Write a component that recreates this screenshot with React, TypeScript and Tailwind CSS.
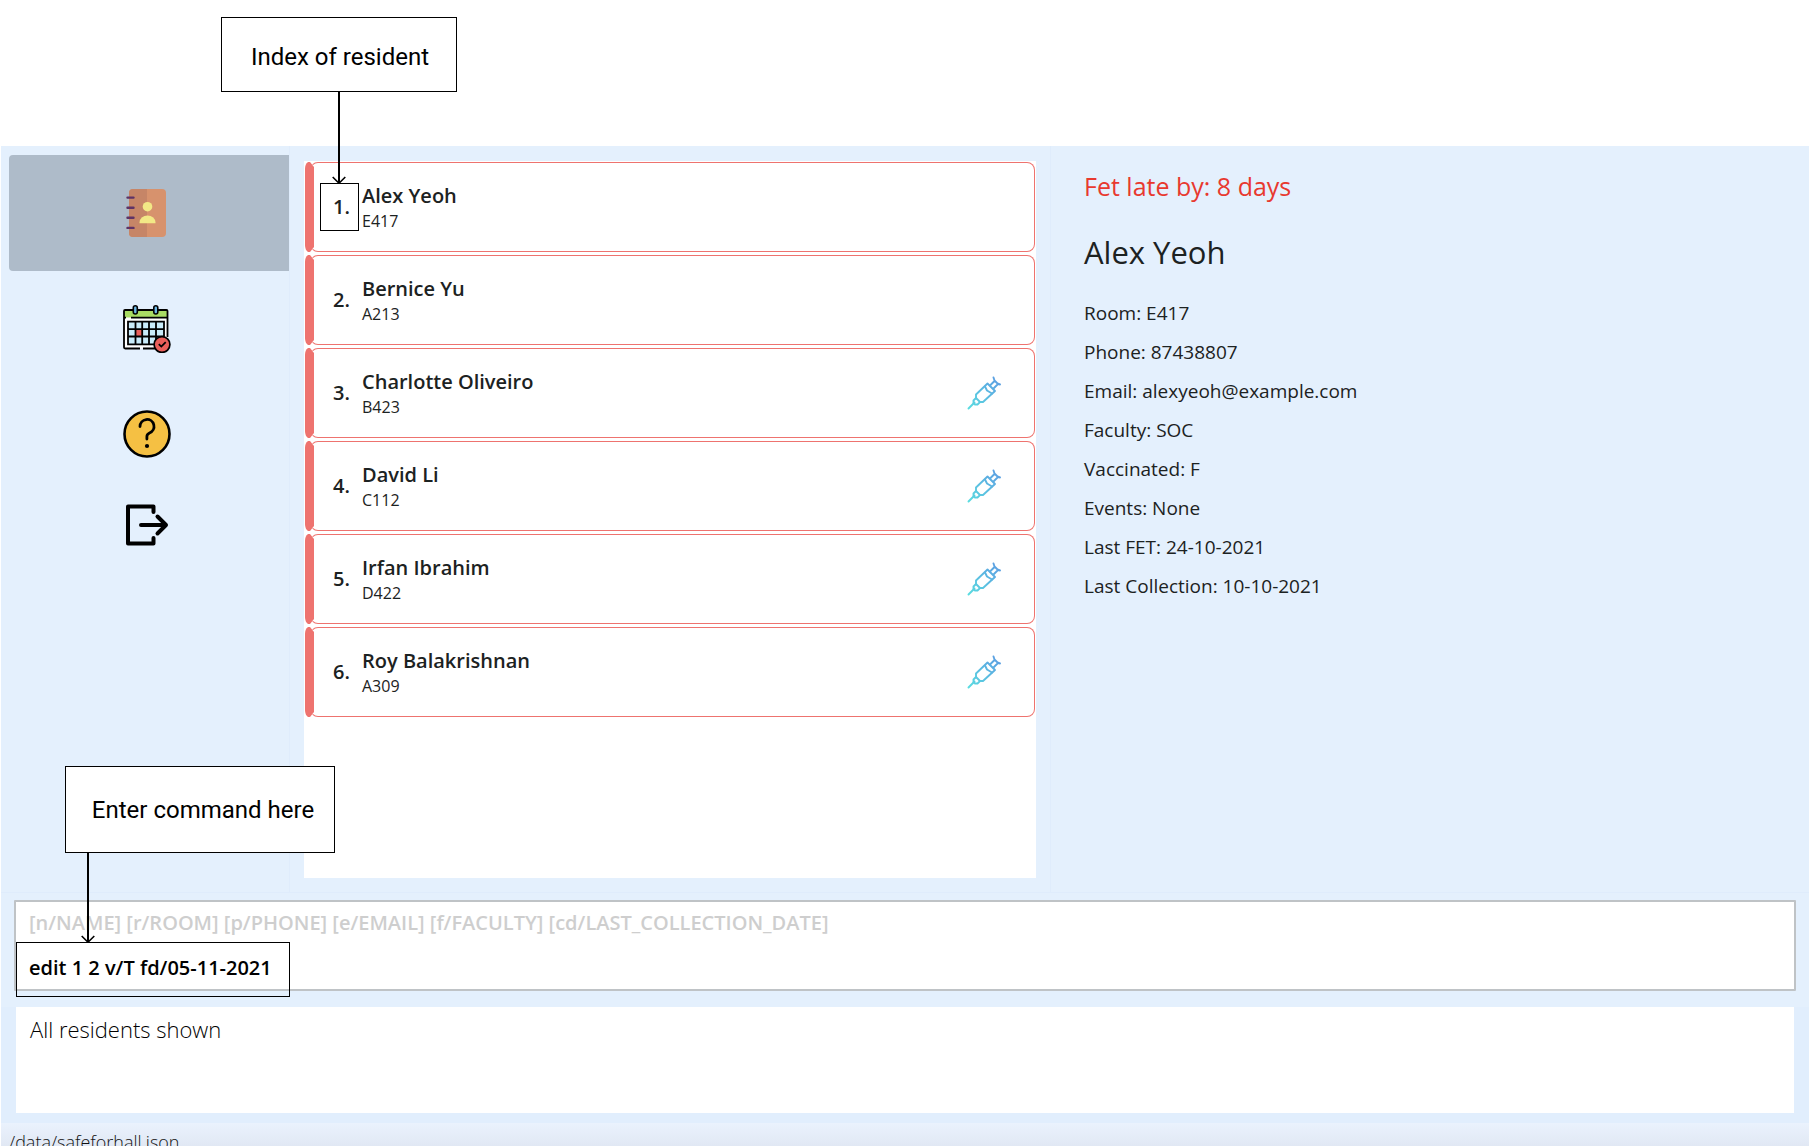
import React from "react";

type Resident = { name: string; room: string; vaccinated: boolean };

const residents: Resident[] = [
  { name: "Alex Yeoh", room: "E417", vaccinated: false },
  { name: "Bernice Yu", room: "A213", vaccinated: false },
  { name: "Charlotte Oliveiro", room: "B423", vaccinated: true },
  { name: "David Li", room: "C112", vaccinated: true },
  { name: "Irfan Ibrahim", room: "D422", vaccinated: true },
  { name: "Roy Balakrishnan", room: "A309", vaccinated: true },
];

const details = [
  "Room: E417",
  "Phone: 87438807",
  "Email: alexyeoh@example.com",
  "Faculty: SOC",
  "Vaccinated: F",
  "Events: None",
  "Last FET: 24-10-2021",
  "Last Collection: 10-10-2021",
];

function BookIcon() {
  return (
    <svg viewBox="0 0 48 48" className="size-12" aria-hidden="true">
      <rect x="6" y="0" width="37" height="48" rx="4" fill="#d7926d" />
      <path d="M10 0H24V48H10a4 4 0 0 1-4-4V4a4 4 0 0 1 4-4Z" fill="#c68567" />
      <g stroke="#5f3366" strokeWidth="2.4" strokeLinecap="round">
        <path d="M4.5 8.6h6M4.5 18.7h6M4.5 28.8h6M4.5 38.9h6" />
      </g>
      <circle cx="24.5" cy="17.7" r="4.8" fill="#f2e886" />
      <path d="M16.5 34.2v-.6a8 7.2 0 0 1 16 0v.6Z" fill="#f2e886" />
    </svg>
  );
}

function CalendarIcon() {
  return (
    <svg viewBox="0 0 48 48" className="size-12" aria-hidden="true">
      <rect x="1" y="5" width="43.5" height="38.5" rx="1" fill="#fff" />
      <path d="M1 5h43.5v7.6H1Z" fill="#a9dc64" />
      <path d="M17 43.5H2.2Q1 43.5 1 42.3V6Q1 5 2 5h41.5Q44.5 5 44.5 6V32M20 43.5h13M8 12.600h36.5M1 12.600h2" fill="none" stroke="#000" strokeWidth="1.8" />
      <path d="M5 16.7h36v22.6H5Z" fill="#c9ecfa" />
      <path d="M13 24h6v7h-6Z" fill="#e95f5a" />
      <path d="M5 16.7h36v22.6H5ZM12.500 16.700v22.600M19.200 16.700v22.600M26 16.700v22.600M33 16.700v22.600M5 24.200h36M5 31.500h36" fill="none" stroke="#000" strokeWidth="1.8" />
      <rect x="10.300" y=".8" width="4" height="8.200" rx="2" fill="#6cb8e4" stroke="#000" strokeWidth="1.600" />
      <rect x="30.800" y=".8" width="4" height="8.200" rx="2" fill="#6cb8e4" stroke="#000" strokeWidth="1.600" />
      <circle cx="39" cy="39.500" r="7.900" fill="#e95f5a" stroke="#000" strokeWidth="1.700" />
      <path d="m35.800 39.200 2.500 2.400 4.400-4.500" fill="none" stroke="#000" strokeWidth="1.800" />
    </svg>
  );
}

function HelpIcon() {
  return (
    <svg viewBox="0 0 48 48" className="size-12" aria-hidden="true">
      <circle cx="24" cy="24" r="22.500" fill="#f5c043" stroke="#000" strokeWidth="2.600" />
      <path d="M17 16.500a7 7 0 1 1 9.500 6.500c-2 .9-2.600 2-2.600 3.600V29" fill="none" stroke="#000" strokeWidth="2.800" strokeLinecap="round" />
      <circle cx="24" cy="36" r="2.100" />
    </svg>
  );
}

function ExitIcon() {
  return (
    <svg viewBox="0 0 48 48" className="size-12" aria-hidden="true">
      <g fill="none" stroke="#000" strokeWidth="4" strokeLinecap="round" strokeLinejoin="round">
        <path d="M30.500 11V5.500H5V42.500H30.500V37" />
        <path d="M18 24H42.500M34.500 15.500 43 24l-8.500 8.500" />
      </g>
    </svg>
  );
}

function SyringeIcon() {
  return (
    <svg viewBox="0 0 34 34" className="size-[34px]" role="img" aria-label="Vaccinated">
      <defs>
        <linearGradient id="syringe" x1="0" y1="34" x2="34" y2="0" gradientUnits="userSpaceOnUse">
          <stop offset="0" stopColor="#5adfe0" />
          <stop offset="1" stopColor="#5c98e2" />
        </linearGradient>
      </defs>
      <g fill="none" stroke="url(#syringe)" strokeWidth="1.900" strokeLinecap="round" strokeLinejoin="round">
        <path d="M1.500 32.500 7.500 26.500" />
        <path d="M6.500 24.500 9 22l4 4-2.500 2.500H8L6.500 27Z" />
        <path d="M9 22v-3.500L20.500 7.500 28 15 16 26h-3" />
        <path d="M18 10.500 20 14.500 25 17.500" />
        <path d="M23 9.500 27.500 5M26.500 12.500 31 8M26.500 1.500 27.500 4.500 30.500 7.500 33 8.500" />
      </g>
    </svg>
  );
}

const navItems = [
  { label: "Residents", Icon: BookIcon, style: "h-[116px] rounded-l bg-[#aebbc9]" },
  { label: "Events", Icon: CalendarIcon, style: "h-[116px]" },
  { label: "Help", Icon: HelpIcon, style: "h-[94px]" },
  { label: "Exit", Icon: ExitIcon, style: "h-[88px]" },
];

function ArrowDown({ className }: { className: string }) {
  return (
    <span className={"flex flex-col items-center " + className}>
      <span className="w-0.5 grow bg-black" />
      <svg viewBox="0 0 14 8" className="absolute bottom-0 h-2 w-3.5" aria-hidden="true">
        <path d="M.7 1 7 7.200 13.300 1" fill="none" stroke="#000" strokeWidth="1.600" />
      </svg>
    </span>
  );
}

function ResidentCard({ resident, index }: { resident: Resident; index: number }) {
  return (
    <li className="flex h-[90px] text-[#1c2222]">
      <svg viewBox="0 0 9 90" preserveAspectRatio="none" className="h-full w-[9px] shrink-0" aria-hidden="true">
        <path d="M3 0 5 0 9 5V85L5 90H3Q0 88 0 83V7Q0 2 3 0Z" fill="#ee736f" />
      </svg>
      <div className="-ml-1 flex min-w-0 grow items-center rounded-lg border border-[#ee736f] border-l-transparent pr-[33px] pl-[22px]">
        <span className="w-[29px] text-xl font-semibold">{index}.</span>
        <div className="min-w-0 grow pt-0.5">
          <h2 className="text-xl leading-[26px] font-semibold">{resident.name}</h2>
          <p className="text-base leading-6">{resident.room}</p>
        </div>
        {resident.vaccinated && <SyringeIcon />}
      </div>
    </li>
  );
}

export default function App() {
  return (
    <div className="relative flex h-screen flex-col overflow-hidden bg-white pt-[146px] pr-[3px] pl-px font-['Open_Sans',sans-serif]">
      <main className="grid min-h-0 grow grid-cols-[289fr_761fr_758fr] bg-[#e4f0fd]">
        <nav aria-label="Main" className="flex flex-col border-r border-[#dfecfc] pt-[9px] pl-2">
          {navItems.map(({ label, Icon, style }) => (
            <button key={label} type="button" aria-label={label} className={"flex items-center justify-center pr-1 " + style}>
              <Icon />
            </button>
          ))}
        </nav>
        <section aria-label="Residents" className="border-r border-[#dfecfc] pt-[15px] pr-3.5 pb-3.5 pl-3.5">
          <ol className="flex h-full flex-col gap-[3px] bg-white p-px">
            {residents.map((resident, i) => (
              <ResidentCard key={resident.name} resident={resident} index={i + 1} />
            ))}
          </ol>
        </section>
        <section aria-label="Resident details" className="pt-5 pl-[33px] text-[#1c2222]">
          <p className="text-[25px] leading-10 text-[#e8392f]">Fet late by: 8 days</p>
          <h1 className="mt-5 text-[31px] leading-[52px]">Alex Yeoh</h1>
          <ul className="mt-4 text-[19px] leading-[39px]">
            {details.map((line) => (
              <li key={line}>{line}</li>
            ))}
          </ul>
        </section>
      </main>

      <section aria-label="Command" className="border-t border-[#dfecfc] bg-[#e4f0fd] px-[13px] pt-[7px] pb-4">
        <div className="relative flex flex-col rounded-[1px] border-2 border-[#bfc3c6] bg-white text-xl font-semibold">
          <label htmlFor="command" className="h-[43px] px-[13px] pt-[5px] leading-8 text-[#cecece]">
            [n/NAME] [r/ROOM] [p/PHONE] [e/EMAIL] [f/FACULTY] [cd/LAST_COLLECTION_DATE]
          </label>
          <input
            id="command"
            defaultValue="edit 1 2 v/T fd/05-11-2021"
            className="h-11 w-full px-[13px] text-black outline-none"
          />
          <span className="pointer-events-none absolute top-10 left-0 h-[55px] w-[274px] border border-black" />
        </div>
      </section>

      <section aria-label="Result" className="bg-[#e1eefd] px-[15px] pb-2.5">
        <output className="block h-[106px] bg-white px-3.5 py-1 text-[22px] leading-9 font-light text-black">
          All residents shown
        </output>
      </section>

      <footer className="h-[23px] shrink-0 overflow-hidden bg-linear-to-b from-[#eaf2fd] to-[#e1e8f4] px-2 pt-[3px] text-lg leading-8 font-light text-[#111]">
        /data/safeforhall.json
      </footer>

      <div className="absolute top-[17px] left-[221px] flex h-[75px] w-[236px] items-center justify-center border border-black bg-white pt-1 pl-0.5 font-[Roboto,sans-serif] text-2xl text-black">
        Index of resident
      </div>
      <ArrowDown className="absolute top-[92px] left-[332px] h-[92px] w-3.5" />
      <span className="absolute top-[183px] left-80 h-12 w-[39px] border border-black" />

      <div className="absolute top-[766px] left-[65px] flex h-[87px] w-[270px] items-center justify-center border border-black bg-white pl-1.5 font-[Roboto,sans-serif] text-2xl text-black">
        Enter command here
      </div>
      <ArrowDown className="absolute top-[852px] left-[81px] h-[91px] w-3.5" />
    </div>
  );
}
